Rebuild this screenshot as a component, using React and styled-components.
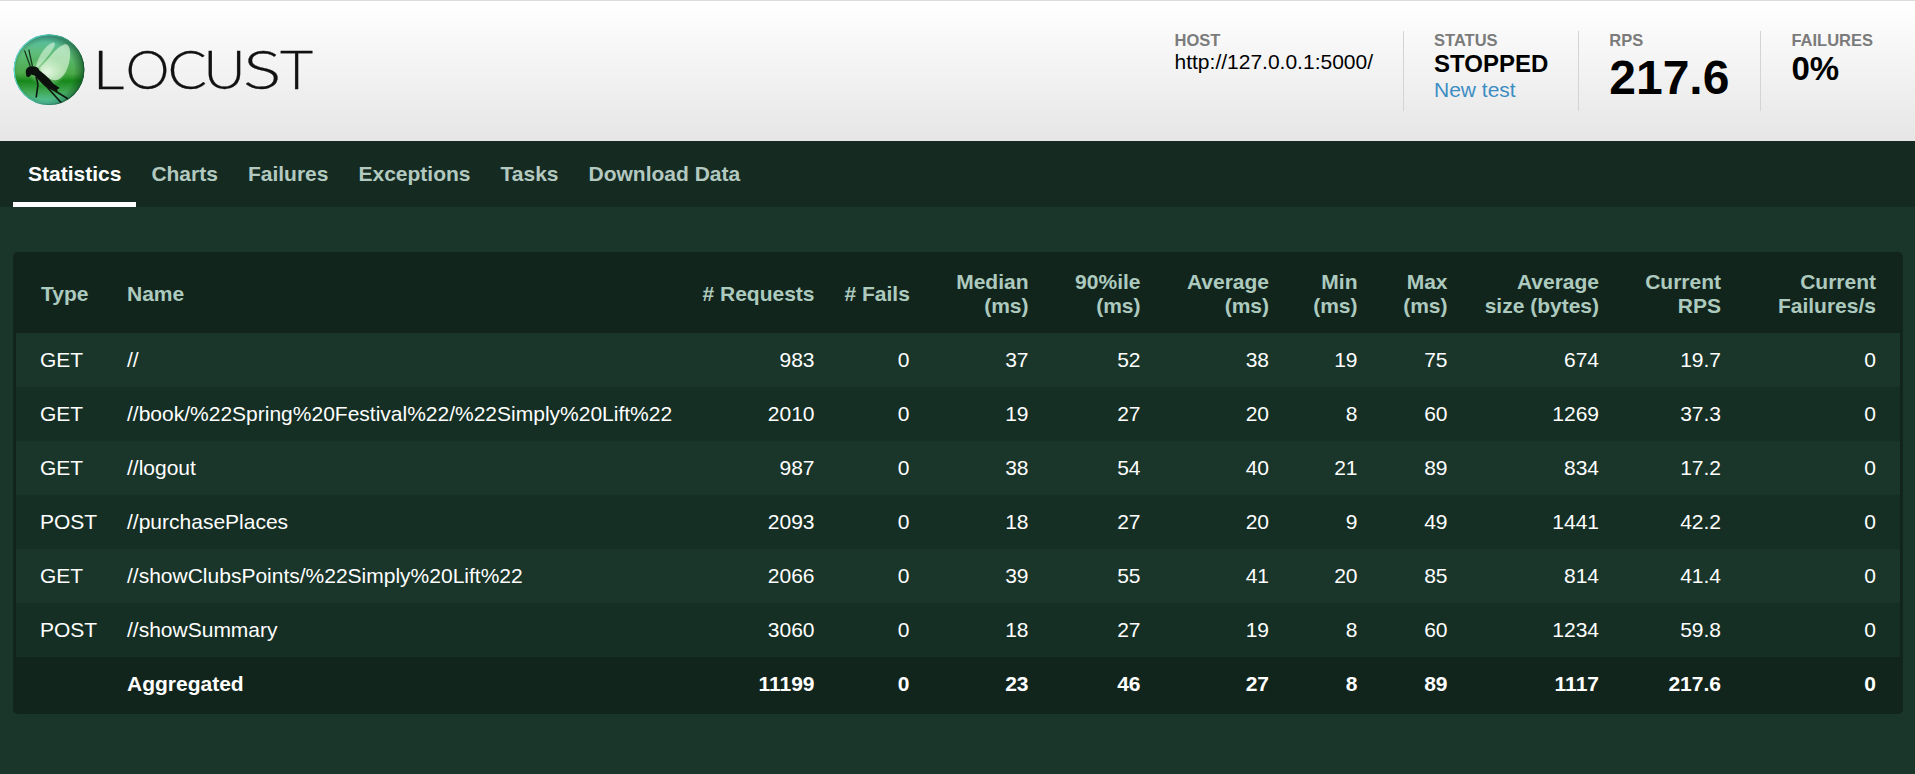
import React from 'react';
import styled, { createGlobalStyle, css } from 'styled-components';

const GlobalStyle = createGlobalStyle`
  * { box-sizing: border-box; }
  body {
    margin: 0;
    background: #1a352a;
    color: #fff;
    font-family: Arial, "Liberation Sans", sans-serif;
    font-size: 21px;
  }
`;

const Page = styled.div`
  height: 774px;
  overflow: hidden;
  display: flex;
  flex-direction: column;
`;

const TopBar = styled.header`
  height: 141px;
  flex: none;
  display: flex;
  justify-content: space-between;
  align-items: flex-start;
  padding: 30px 12px 0 13px;
  border-top: 1px solid #dcdcdc;
  background: linear-gradient(#ffffff, #e6e6e6);
  color: #000;
`;

const LogoSvg = styled.svg`
  display: block;
  width: 310px;
  height: 80px;
`;

const Letter = styled.text`
  font-family: Lato, sans-serif;
  font-weight: 300;
  font-size: 54px;
  fill: #111;
`;

const Stats = styled.div`
  display: flex;
`;

const Stat = styled.div`
  height: 80px;
  padding: 0 ${(p) => (p.$wide ? 31 : 30)}px 0 30px;
  border-left: ${(p) => (p.$first ? '0' : '1px solid #d4d4d4')};
`;

const StatLabel = styled.div`
  height: 19px;
  line-height: 19px;
  font-size: 16.5px;
  font-weight: bold;
  color: #7b7b7b;
`;

const StatValue = styled.div`
  font-size: ${(p) => p.$size}px;
  line-height: ${(p) => p.$line}px;
  font-weight: ${(p) => (p.$bold ? 'bold' : 'normal')};
`;

const NewTest = styled.a`
  display: block;
  line-height: 24px;
  color: #3d8dc3;
`;

const Tabs = styled.nav`
  height: 66px;
  flex: none;
  display: flex;
  padding-left: 13px;
  background: #152b22;
`;

const Tab = styled.a`
  padding: 0 15px;
  height: 66px;
  line-height: 66px;
  font-weight: bold;
  color: #b3c9c0;
  ${(p) =>
    p.$active &&
    css`
      color: #fff;
      border-bottom: 5px solid #fff;
    `}
`;

const Content = styled.main`
  padding: 45px 12px 0 13px;
`;

const TableFrame = styled.div`
  border: 3px solid #12251d;
  border-radius: 5px;
  background: #12251d;
`;

const StatsTable = styled.table`
  width: 100%;
  table-layout: fixed;
  border-collapse: collapse;
`;

const cell = css`
  padding: 0 15px;
  text-align: ${(p) => (p.$left ? 'left' : 'right')};
  vertical-align: middle;
  white-space: pre;
  &:first-child { padding-left: 24px; }
  &:last-child { padding-right: 24px; }
`;

const HeadCell = styled.th`
  ${cell}
  height: 78px;
  line-height: 24px;
  color: #adcabf;
  &:first-child { padding-left: 25px; }
`;

const Cell = styled.td`
  ${cell}
`;

const Row = styled.tr`
  height: 54px;
  background: ${(p) => (p.$total ? '#12251d' : p.$even ? '#162f25' : '#1a352a')};
  font-weight: ${(p) => (p.$total ? 'bold' : 'normal')};
`;

const Col = styled.col`
  width: ${(p) => p.$w}px;
`;

const columns = [
  { label: 'Type', w: 96 },
  { label: 'Name', w: 575.5 },
  { label: '# Requests', w: 142 },
  { label: '# Fails', w: 95 },
  { label: 'Median\n(ms)', w: 119 },
  { label: '90%ile\n(ms)', w: 112 },
  { label: 'Average\n(ms)', w: 128.5 },
  { label: 'Min\n(ms)', w: 88.5 },
  { label: 'Max\n(ms)', w: 90 },
  { label: 'Average\nsize (bytes)', w: 151.5 },
  { label: 'Current\nRPS', w: 122 },
  { label: 'Current\nFailures/s', w: 164 },
];

const rows = [
  ['GET', '//', 983, 0, 37, 52, 38, 19, 75, 674, '19.7', 0],
  ['GET', '//book/%22Spring%20Festival%22/%22Simply%20Lift%22', 2010, 0, 19, 27, 20, 8, 60, 1269, '37.3', 0],
  ['GET', '//logout', 987, 0, 38, 54, 40, 21, 89, 834, '17.2', 0],
  ['POST', '//purchasePlaces', 2093, 0, 18, 27, 20, 9, 49, 1441, '42.2', 0],
  ['GET', '//showClubsPoints/%22Simply%20Lift%22', 2066, 0, 39, 55, 41, 20, 85, 814, '41.4', 0],
  ['POST', '//showSummary', 3060, 0, 18, 27, 19, 8, 60, 1234, '59.8', 0],
  ['', 'Aggregated', 11199, 0, 23, 46, 27, 8, 89, 1117, '217.6', 0],
];

const tabs = ['Statistics', 'Charts', 'Failures', 'Exceptions', 'Tasks', 'Download Data'];

// Each wordmark letter has its own position and widening factor.
const wordmark = [
  { ch: 'L', x: 92.6, s: 1.16 },
  { ch: 'O', x: 125.5, s: 1.03 },
  { ch: 'C', x: 167.6, s: 1.08 },
  { ch: 'U', x: 203.2, s: 1.08 },
  { ch: 'S', x: 243, s: 1.33 },
  { ch: 'T', x: 280, s: 1.06 },
];

function Logo() {
  return (
    <LogoSvg viewBox="13 31 310 80" role="img" aria-label="Locust">
      <defs>
        <linearGradient id="orb" x1="0" y1="0" x2="0" y2="1">
          <stop offset="0" stopColor="#55bdb0" />
          <stop offset="0.25" stopColor="#5fbd7c" />
          <stop offset="0.55" stopColor="#4caa4a" />
          <stop offset="0.66" stopColor="#17881a" />
          <stop offset="0.8" stopColor="#3fa650" />
          <stop offset="1" stopColor="#5cc9b0" />
        </linearGradient>
        <radialGradient id="rim" cx="0.45" cy="0.52" r="0.56">
          <stop offset="0.72" stopColor="#06401a" stopOpacity="0" />
          <stop offset="1" stopColor="#06401a" stopOpacity="0.65" />
        </radialGradient>
        <radialGradient id="glow" cx="0.5" cy="0.5" r="0.5">
          <stop offset="0" stopColor="#fff" stopOpacity="0.95" />
          <stop offset="1" stopColor="#c8f5c0" stopOpacity="0" />
        </radialGradient>
        <linearGradient id="edge" x1="0" y1="0" x2="1" y2="0.35">
          <stop offset="0" stopColor="#6fe0e8" />
          <stop offset="0.5" stopColor="#46b8a0" />
          <stop offset="1" stopColor="#1c5c34" />
        </linearGradient>
      </defs>
      <circle cx="49" cy="69.7" r="35.3" fill="url(#orb)" />
      <circle cx="49" cy="69.7" r="35.3" fill="url(#rim)" />
      <ellipse cx="47" cy="72" rx="19" ry="15" fill="url(#glow)" />
      <circle cx="49" cy="69.7" r="34.8" fill="none" stroke="url(#edge)" strokeWidth="1.2" />
      <path d="M36 67 C38 57 45 45 53 42.5 C56 42 55 46 53 49 C48 57 42 63 37 68 Z" fill="#dcf5de" fillOpacity="0.6" />
      <path d="M40 68 C48 60 55 48 64 44.5 C69 43 71 50 70 57 C69 68 64 78 57 80 C51 81 44 76 40 68 Z" fill="#dcf5d8" fillOpacity="0.68" />
      <path d="M25.8 73 C25.5 68 28.5 65.8 32.5 66.2 C36 66.2 38.5 67.5 39.5 70.5 C44.5 74 50 79 53 83.5 L59.8 88 L57 89.5 L58 91.5 C51.5 90.5 46.5 88 43 84.5 L34.5 75.5 L31 74.5 C30.5 76.5 28.5 77.5 26.5 76.5 Z" fill="#0c110d" />
      <path d="M30.5 67 L24.5 50.5 M32.5 66.5 L28.8 49.5" fill="none" stroke="#14331c" strokeWidth="1.2" />
      <path d="M36 77 C37.5 81 38.5 84 37.5 88 L36.2 97.5 M47 87 L61 102.5 M52 89 L67.8 98.8" fill="none" stroke="#101a12" strokeWidth="1.7" />
      {wordmark.map((l) => (
        <Letter key={l.ch} transform={`translate(${l.x} 89) scale(${l.s} 1)`} stroke="#111" strokeWidth="0.3">
          {l.ch}
        </Letter>
      ))}
    </LogoSvg>
  );
}

export default function App() {
  return (
    <Page>
      <GlobalStyle />
      <TopBar>
        <Logo />
        <Stats>
          <Stat $first>
            <StatLabel>HOST</StatLabel>
            <StatValue $size={21} $line={24}>http://127.0.0.1:5000/</StatValue>
          </Stat>
          <Stat>
            <StatLabel>STATUS</StatLabel>
            <StatValue $size={24} $line={28} $bold>STOPPED</StatValue>
            <NewTest>New test</NewTest>
          </Stat>
          <Stat $wide>
            <StatLabel>RPS</StatLabel>
            <StatValue $size={48} $line={55} $bold>217.6</StatValue>
          </Stat>
          <Stat>
            <StatLabel>FAILURES</StatLabel>
            <StatValue $size={33} $line={38} $bold>0%</StatValue>
          </Stat>
        </Stats>
      </TopBar>
      <Tabs>
        {tabs.map((t, i) => (
          <Tab key={t} $active={i === 0}>{t}</Tab>
        ))}
      </Tabs>
      <Content>
        <TableFrame>
          <StatsTable>
            <colgroup>
              {columns.map((c, i) => <Col key={i} $w={c.w} />)}
            </colgroup>
            <thead>
              <tr>
                {columns.map((c, i) => <HeadCell key={i} $left={i < 2}>{c.label}</HeadCell>)}
              </tr>
            </thead>
            <tbody>
              {rows.map((r, i) => (
                <Row key={i} $even={i % 2 === 1} $total={i === rows.length - 1}>
                  {r.map((v, j) => <Cell key={j} $left={j < 2}>{v}</Cell>)}
                </Row>
              ))}
            </tbody>
          </StatsTable>
        </TableFrame>
      </Content>
    </Page>
  );
}
